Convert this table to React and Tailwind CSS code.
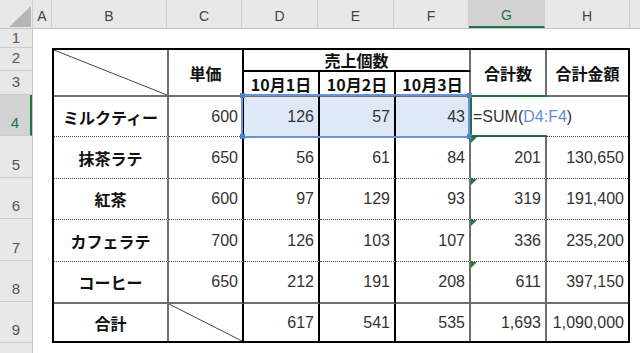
import React from "react";

// 共通スタイル
const JP = "font-['Noto_Sans_CJK_JP',sans-serif] font-bold text-[16px] leading-none text-[#111]";
const NUM = "font-['Liberation_Sans',Arial,sans-serif] text-[16px] leading-none text-[#333]";
const GRAY = "border-r-2 border-r-[#6e6e6e]";
const BLACK = "border-r-2 border-r-black";
const DOTTED = "border-b border-b-[#444] [border-bottom-style:dotted]!";
const SOLID_B = "border-b-2 border-b-[#6e6e6e]";

const colHeads = [
  ["A", "w-[19px]"],
  ["B", "w-[115px]"],
  ["C", "w-[75px]"],
  ["D", "w-[76px]"],
  ["E", "w-[76px]"],
  ["F", "w-[75px]"],
  ["G", "w-[76px]"],
  ["H", "w-[85px]"],
];

const rowHeads = [
  ["1", "h-[19px] pb-[2px]"],
  ["2", "h-[23px] pb-[5px]"],
  ["3", "h-[24px] pb-[5px]"],
  ["4", "h-[41px] pb-[5px]"],
  ["5", "h-[42px] pb-[5px]"],
  ["6", "h-[41px] pb-[5px]"],
  ["7", "h-[42px] pb-[5px]"],
  ["8", "h-[41px] pb-[5px]"],
  ["9", "h-[41px] pb-[5px]"],
];

const rows = [
  ["ミルクティー", "600", "126", "57", "43", null, ""],
  ["抹茶ラテ", "650", "56", "61", "84", "201", "130,650"],
  ["紅茶", "600", "97", "129", "93", "319", "191,400"],
  ["カフェラテ", "700", "126", "103", "107", "336", "235,200"],
  ["コーヒー", "650", "212", "191", "208", "611", "397,150"],
];

const rightBorders = [GRAY, BLACK, BLACK, BLACK, GRAY, GRAY, ""];

function Diagonal() {
  return (
    <svg className="absolute inset-0 h-full w-full" viewBox="0 0 100 100" preserveAspectRatio="none">
      <line x1="0" y1="0" x2="100" y2="100" stroke="#444" strokeWidth="1" vectorEffect="non-scaling-stroke" />
    </svg>
  );
}

function ErrorMark() {
  return <div className="absolute left-0 top-0 h-0 w-0 border-t-[6px] border-t-[#1d7a3a] border-r-[6px] border-r-transparent" />;
}

export default function App() {
  return (
    <div className="h-[353px] w-[640px] overflow-hidden bg-white">
      {/* 列見出し */}
      <div className="flex h-[29px] border-b border-b-[#c4c4c4] bg-[#e8e8e8] font-['Liberation_Sans',Arial,sans-serif] text-[14px] text-[#444]">
        <div className="relative w-[33px] shrink-0 border-r border-r-[#cfcfcf]">
          <svg className="absolute inset-0" width="33" height="29">
            <polygon points="9,27 31,27 31,6" fill="#b5b5b5" />
          </svg>
        </div>
        {colHeads.map(([k, w]) => (
          <div
            key={k}
            className={`${w} flex shrink-0 items-center justify-center border-r border-r-[#cfcfcf] pt-[4px] ${
              k === "G" ? "border-b-2 border-b-[#217346] bg-[#d3d3d3] text-[#217346]" : ""
            }`}
          >
            {k}
          </div>
        ))}
        <div className="flex-1" />
      </div>

      <div className="flex">
        {/* 行見出し */}
        <div className="flex w-[33px] shrink-0 flex-col border-r border-r-[#c4c4c4] bg-[#e8e8e8] font-['Liberation_Sans',Arial,sans-serif] text-[15px] leading-none text-[#555]">
          {rowHeads.map(([k, h]) => (
            <div
              key={k}
              className={`${h} flex items-end justify-center border-b border-b-[#cdcdcd] ${
                k === "4" ? "border-r-2 border-r-[#217346] bg-[#d3d3d3] text-[#217346]" : ""
              }`}
            >
              {k}
            </div>
          ))}
          <div className="h-[20px]" />
        </div>

        {/* シート */}
        <div className="pl-[19px] pt-[19px]">
          <div className="relative grid h-[295px] w-[578px] grid-cols-[115px_75px_76px_76px_75px_76px_81px] grid-rows-[22px_25px_40px_42px_41px_42px_42px_37px] border-2 border-black">
            {/* 見出し行 */}
            <div className={`relative row-span-2 ${GRAY} ${SOLID_B}`}>
              <Diagonal />
            </div>
            <div className={`row-span-2 flex items-center justify-center ${BLACK} ${SOLID_B} ${JP}`}>単価</div>
            <div className={`col-span-3 flex items-center justify-center border-b-2 border-b-black ${GRAY} ${JP}`}>売上個数</div>
            <div className={`row-span-2 flex items-center justify-center ${GRAY} ${SOLID_B} ${JP}`}>合計数</div>
            <div className={`row-span-2 flex items-center justify-center ${SOLID_B} ${JP}`}>合計金額</div>
            <div className={`flex items-center justify-center ${BLACK} ${SOLID_B} ${JP}`}>10月1日</div>
            <div className={`flex items-center justify-center ${BLACK} ${SOLID_B} ${JP}`}>10月2日</div>
            <div className={`flex items-center justify-center ${GRAY} ${SOLID_B} ${JP}`}>10月3日</div>

            {/* 明細行 */}
            {rows.map((r, i) =>
              r.map((v, j) => {
                const bottom = i < 4 ? DOTTED : SOLID_B;
                const sel = i === 0 && j >= 2 && j <= 4 ? "bg-[#dfe8f6]" : "";
                if (j === 0) {
                  return (
                    <div key={`${i}-${j}`} className={`flex items-center justify-center ${rightBorders[j]} ${bottom} ${JP}`}>
                      {v}
                    </div>
                  );
                }
                if (v === null) {
                  return (
                    <div key={`${i}-${j}`} className={`z-10 flex items-center whitespace-nowrap pl-[2px] ${bottom} ${NUM}`}>
                      =SUM(<span className="text-[#5b8fd4]">D4:F4</span>)
                    </div>
                  );
                }
                return (
                  <div
                    key={`${i}-${j}`}
                    className={`relative flex items-center justify-end pr-1 ${rightBorders[j]} ${bottom} ${sel} ${NUM}`}
                  >
                    {j === 5 && i > 0 && <ErrorMark />}
                    {v}
                  </div>
                );
              })
            )}

            {/* 合計行 */}
            <div className={`flex items-center justify-center ${GRAY} ${JP}`}>合計</div>
            <div className={`relative ${BLACK}`}>
              <Diagonal />
            </div>
            <div className={`flex items-center justify-end pr-1 ${BLACK} ${NUM}`}>617</div>
            <div className={`flex items-center justify-end pr-1 ${BLACK} ${NUM}`}>541</div>
            <div className={`flex items-center justify-end pr-1 ${GRAY} ${NUM}`}>535</div>
            <div className={`flex items-center justify-end pr-1 ${GRAY} ${NUM}`}>1,693</div>
            <div className={`flex items-center justify-end pr-1 ${NUM}`}>1,090,000</div>

            {/* アクティブセル G4 */}
            <div className="pointer-events-none absolute left-[416px] top-[45px] h-[42px] w-[77px] border-y-2 border-l-2 border-[#217346]" />
            {/* 参照範囲 D4:F4 */}
            <div className="pointer-events-none absolute left-[187px] top-[44px] h-[44px] w-[229px] border-2 border-[#6b93d3]" />
            <div className="absolute left-[186px] top-[43px] h-[5px] w-[5px] bg-[#4f7fc7]" />
            <div className="absolute left-[186px] top-[84px] h-[5px] w-[5px] bg-[#4f7fc7]" />
            <div className="absolute left-[413px] top-[43px] h-[5px] w-[5px] bg-[#4f7fc7]" />
            <div className="absolute left-[413px] top-[84px] h-[5px] w-[5px] bg-[#4f7fc7]" />
          </div>
        </div>
      </div>
    </div>
  );
}
